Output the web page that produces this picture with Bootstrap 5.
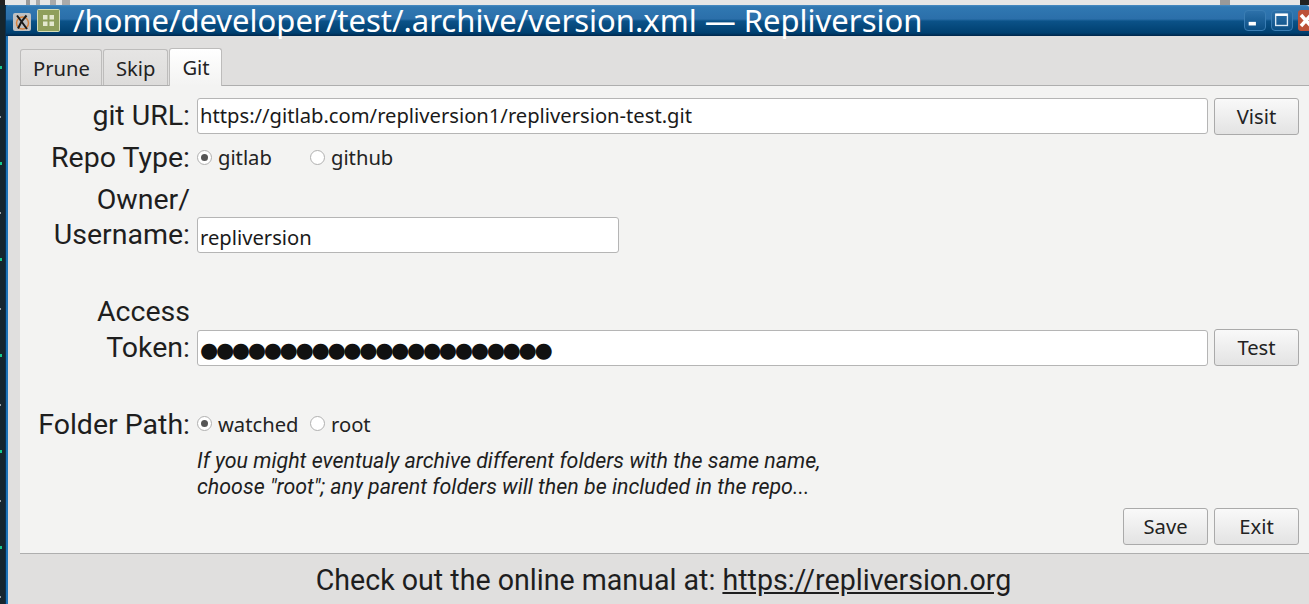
<!doctype html>
<html lang="en"><head><meta charset="utf-8">
<link rel="stylesheet" href="https://cdn.jsdelivr.net/npm/bootstrap@5.3.0/dist/css/bootstrap.min.css">
<style>
html,body{margin:0;height:604px;overflow:hidden;background:#e6e6e6}
.shell{height:604px;position:relative;padding-left:5px;background:repeating-linear-gradient(transparent 0,transparent 66px,#14c88c 66px,#14c88c 69px,transparent 69px,transparent 96px) 0 0/2px 100% no-repeat,repeating-linear-gradient(transparent 0,transparent 19px,#9aa0a3 19px,#9aa0a3 21px,transparent 21px,transparent 96px) 0 97px/1px 100% no-repeat,linear-gradient(#16262e,#16262e) 0 0/5px 100% no-repeat,#e6e6e6}
.strip{height:5px;margin-left:-5px;background:linear-gradient(90deg,#222 0,#222 5px,#e6e6e6 5px,#e6e6e6 26px,#999 26px,#999 30px,#e6e6e6 30px,#e6e6e6 36px,#aaa 36px,#aaa 40px,#e6e6e6 40px,#e6e6e6 50px,#aaa 50px,#aaa 56px,#e6e6e6 56px,#e6e6e6 62px,#aaa 62px,#aaa 70px,#e6e6e6 70px,#e6e6e6 1220px,#999 1220px,#999 1230px,#e6e6e6 1230px,#e6e6e6 1300px,#222 1300px)}
.win{background:#e0dfde;min-width:0;height:599px;border-left:1px solid #0a3050;box-shadow:inset 2px 0 0 #1d74b8}
.win>*{flex:none}
.titlebar{height:31px;background:linear-gradient(#4a8cc2 0,#3078b2 6%,#2b6faa 45%,#0b5288 52%,#004070 90%,#00264a 100%);color:#fff;font:31px/31px "Noto Sans",sans-serif;padding-left:7px;white-space:nowrap;border-radius:3px 3px 0 0}
.ico1{width:18px;height:18px;flex:none;margin:2px 6px 0 0}
.ico2{width:23px;height:23px;flex:none;margin-top:-1px}
.wtitle{margin-left:13px}
.wbtn{width:22px;height:21px;border-radius:4px;border:1px solid #3a7db3;background:linear-gradient(#2d71aa,#0b4f85);flex:none;margin-left:5px}
.wbtn.cl{background:#bd5138;border:0;width:11px;border-radius:3px 0 0 3px}
.tabrow{padding:12px 0 0 14px;height:49px;font:20.2px "Noto Sans",sans-serif;color:#232323}
.tabx{height:36px;padding:0 11px 0 12px;border:1px solid #bdbcbb;border-bottom:0;background:linear-gradient(#e6e5e4,#dddcdb);border-radius:3px 3px 0 0;line-height:36px}
.tabx+.tabx{margin-left:1px}
.tabx:nth-child(2){padding-right:12px}
.tabx.on{background:linear-gradient(#fff,#f3f3f2);height:38px;line-height:37px;z-index:1;margin-bottom:-1px}
.panel{margin-left:14px;height:469px;background:#f3f3f2;border-top:1px solid #aeaeae;border-bottom:1px solid #aeaeae;padding:12px 10px 0 0;color:#1e1e1e}
.lab{width:170px;flex:none;text-align:right;font:28.5px/35.5px Roboto,sans-serif;margin-right:7px;color:#1e1e1e;white-space:nowrap}
.r3 .lab{line-height:35px;margin-bottom:1px}
.r4 .lab{line-height:36px}
.fld{font:20.2px/33px "Noto Sans",sans-serif;height:36px;border:1px solid #b5b5b5;border-radius:3px;background:#fff;padding:0 2px;color:#1a1a1a;white-space:nowrap;overflow:hidden}
.low{padding-top:3px}
.gro{flex:1 1 0;min-width:0}
.short{width:422px;flex:none}
.dots{font-family:"DejaVu Sans",sans-serif;font-size:21px;letter-spacing:-2.4px;line-height:38px;color:#111}
.qb{width:85px;height:37px;flex:none;margin-left:6px;border:1px solid #aaa;border-radius:3px;background:linear-gradient(#f9f9f9,#e3e3e3);font:20.2px/35px "Noto Sans",sans-serif;color:#232323;text-align:center;padding:0}
.rad{font:20.2px/30px "Noto Sans",sans-serif;color:#232323;padding-bottom:2px}
.first{width:113px}
.dot{width:15px;height:15px;border:1px solid #b0b0b0;border-radius:50%;background:#fff;flex:none;margin-right:6px;display:flex;align-items:center;justify-content:center}
.dot.chk::after{content:"";width:7px;height:7px;border-radius:50%;background:#555}
.r1{height:36px;margin-bottom:9px}
.r2{height:30px;margin-bottom:5px}
.r3{height:75px;margin-bottom:41px}
.r4{height:72px;margin-bottom:41px}
.r5{height:35px}
.note{margin-left:177px;font:italic 21.4px/26px Roboto,sans-serif;color:#1e1e1e;margin-top:6px;white-space:nowrap}
.btnrow{margin-top:8px}
.foot{font:28.6px/52px Roboto,sans-serif;color:#1e1e1e;text-align:center;padding-left:12px;height:45px}
.foot a{color:#1e1e1e}
</style></head><body>
<div class="shell">
<div class="strip"></div>
<div class="win d-flex flex-column">
<div class="titlebar d-flex align-items-center">
<svg class="ico1" viewBox="0 0 18 18"><rect width="18" height="18" rx="2" fill="#bfc0c1"/><circle cx="9.5" cy="10" r="6" fill="none" stroke="#d9813b" stroke-width="1.5"/><path d="M4 2.5l10 13.500M13.500 2.500L8.500 8.500l-3.500 7" stroke="#1a1a1a" stroke-width="2" fill="none"/></svg>
<svg class="ico2" viewBox="0 0 23 23"><rect x=".5" y=".5" width="22" height="22" rx="1" fill="#8f9f5c" stroke="#d5dcb8"/><g fill="#e4e8cf"><rect x="6" y="6" width="4.500" height="4.500"/><rect x="12.500" y="6" width="4.500" height="4.500"/><rect x="6" y="12.500" width="4.500" height="4.500"/><rect x="12.500" y="12.500" width="4.500" height="4.500"/></g></svg>
<span class="wtitle flex-grow-1">/home/developer/test/.archive/version.xml — Repliversion</span>
<svg class="wbtn" viewBox="0 0 22 21"><rect x="4" y="12" width="8" height="4" fill="#fff"/></svg>
<svg class="wbtn" viewBox="0 0 22 21"><rect x="4" y="3.500" width="13" height="12.500" fill="none" stroke="#dce9f4" stroke-width="1.500"/><rect x="4" y="3" width="13" height="2.500" fill="#fff"/></svg>
<svg class="wbtn cl" viewBox="0 0 11 21"><path d="M3 5l10 11M13 5L3 16" stroke="#fff" stroke-width="3.500"/></svg>
</div>
<div class="tabrow d-flex align-items-end"><div class="tabx">Prune</div><div class="tabx">Skip</div><div class="tabx on">Git</div></div>
<div class="panel d-flex flex-column">
<div class="d-flex r1"><div class="lab">git URL:</div><div class="fld gro">https://gitlab.com/repliversion1/repliversion-test.git</div><button class="qb">Visit</button></div>
<div class="d-flex align-items-center r2"><div class="lab">Repo Type:</div><div class="rad first d-flex align-items-center"><span class="dot chk"></span>gitlab</div><div class="rad d-flex align-items-center"><span class="dot"></span>github</div></div>
<div class="d-flex align-items-end r3"><div class="lab">Owner/<br>Username:</div><div class="fld short low">repliversion</div></div>
<div class="d-flex align-items-end r4"><div class="lab">Access<br>Token:</div><div class="fld gro dots">●●●●●●●●●●●●●●●●●●●●●●</div><button class="qb">Test</button></div>
<div class="d-flex align-items-center r5"><div class="lab">Folder Path:</div><div class="rad first d-flex align-items-center"><span class="dot chk"></span>watched</div><div class="rad d-flex align-items-center"><span class="dot"></span>root</div></div>
<div class="note">If you might eventualy archive different folders with the same name,<br>choose "root"; any parent folders will then be included in the repo...</div>
<div class="d-flex justify-content-end btnrow"><button class="qb">Save</button><button class="qb">Exit</button></div>
</div>
<div class="foot">Check out the online manual at: <a href="#">https://repliversion.org</a></div>
</div>
</div>
</body></html>
